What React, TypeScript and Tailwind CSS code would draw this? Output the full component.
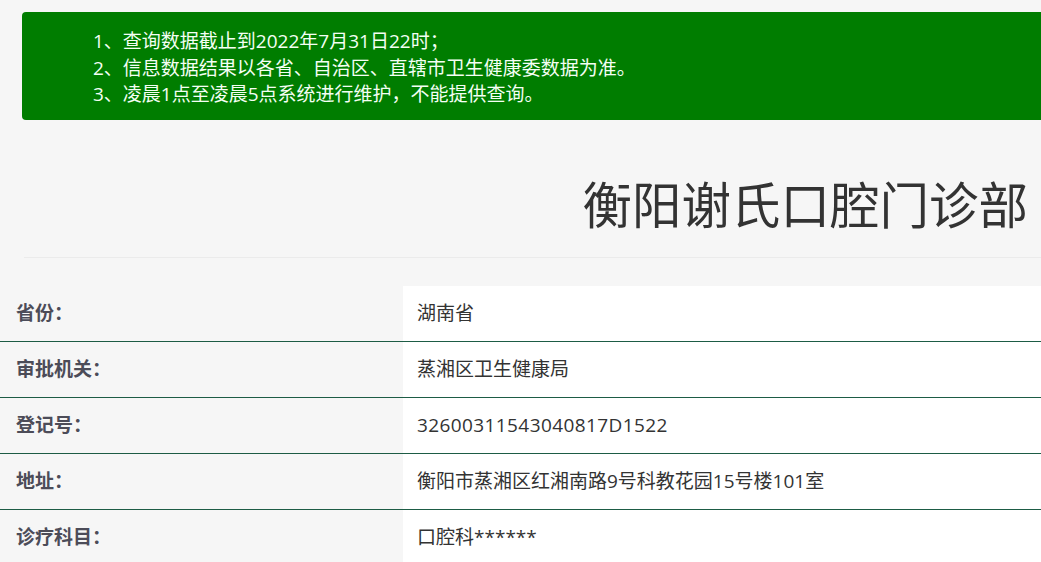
import React from "react";

const rows: [string, string, string][] = [
  ["省份：", "湖南省", ""],
  ["审批机关：", "蒸湘区卫生健康局", ""],
  ["登记号：", "32600311543040817D1522", "tracking-[0.4px]"],
  ["地址：", "衡阳市蒸湘区红湘南路9号科教花园15号楼101室", ""],
  ["诊疗科目：", "口腔科******", ""],
];

export default function App() {
  return (
    <div
      className="w-[1041px] h-[562px] overflow-hidden bg-[#f6f6f6]"
      style={{ fontFamily: '"Open Sans", "Noto Sans CJK SC", sans-serif' }}
    >
      <div className="pt-[12px] pl-[22px]">
        <div className="bg-[#007d00] rounded-l-[4px] h-[108px] pt-[16px] pl-[71px] text-[19px] leading-[26.5px] text-[#f4fff4]">
          <div>1、查询数据截止到2022年7月31日22时；</div>
          <div>2、信息数据结果以各省、自治区、直辖市卫生健康委数据为准。</div>
          <div>3、凌晨1点至凌晨5点系统进行维护，不能提供查询。</div>
        </div>
      </div>
      <div className="ml-[24px] h-[138px] border-b border-[#ebebeb] flex items-center justify-end pr-[13px]">
        <h1 className="text-[49.5px] text-[#333] font-normal leading-none mt-[34px]">衡阳谢氏口腔门诊部</h1>
      </div>
      <div className="mt-[28px]">
        {rows.map(([k, v, t], i) => (
          <div key={i} className="flex h-[56px] border-b border-[#1d5c45]">
            <div className="w-[403px] flex items-center pl-[16px] text-[19px] font-bold text-[#4c4c58]">
              {k}
            </div>
            <div className={`flex-1 bg-white flex items-center pl-[14px] text-[19px] text-[#333] ${t}`}>
              {v}
            </div>
          </div>
        ))}
      </div>
    </div>
  );
}
